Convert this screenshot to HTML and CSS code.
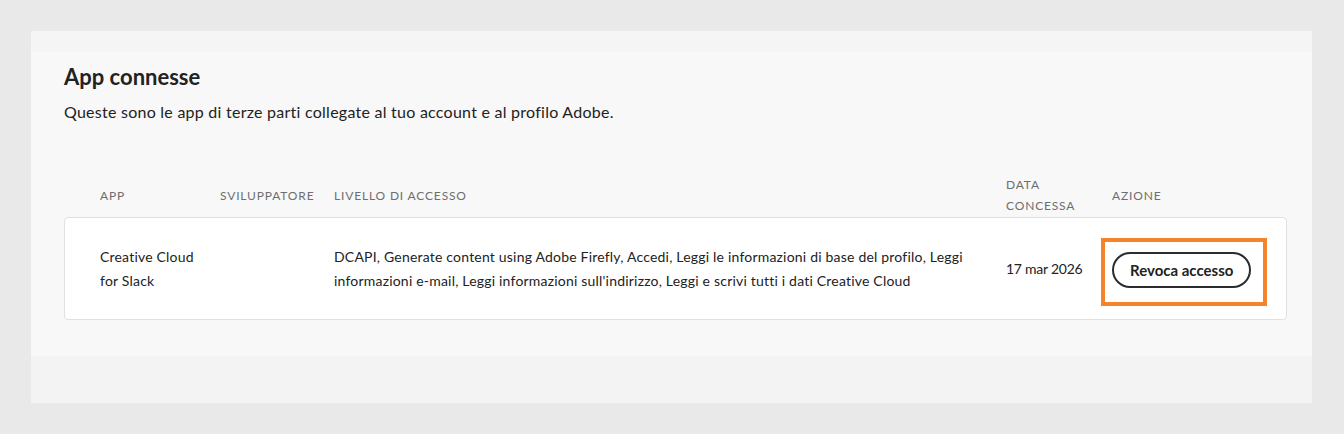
FILE: index.html
```html
<!DOCTYPE html>
<html lang="it">
<head>
<meta charset="utf-8">
<title>App connesse</title>
<link rel="stylesheet" href="styles.css">
</head>
<body>
<div class="page">
  <div class="panel">
    <div class="strip-top"></div>
    <section class="section">
      <h2 class="title">App connesse</h2>
      <p class="subtitle">Queste sono le app di terze parti collegate al tuo account e al profilo Adobe.</p>
      <div class="table">
        <div class="thead grid">
          <div class="th">App</div>
          <div class="th">Sviluppatore</div>
          <div class="th">Livello di accesso</div>
          <div class="th">Data<br>concessa</div>
          <div class="th">Azione</div>
        </div>
        <div class="tbody">
          <div class="row grid">
            <div class="td">Creative Cloud<br>for Slack</div>
            <div class="td"></div>
            <div class="td">DCAPI, Generate content using Adobe Firefly, Accedi, Leggi le informazioni di base del profilo, Leggi informazioni e-mail, Leggi informazioni sull'indirizzo, Leggi e scrivi tutti i dati Creative Cloud</div>
            <div class="td date">17 mar 2026</div>
            <div class="td action">
              <div class="highlight"><button class="btn">Revoca accesso</button></div>
            </div>
          </div>
        </div>
      </div>
    </section>
    <div class="strip-bottom"></div>
  </div>
</div>
</body>
</html>
```
FILE: styles.css
```css
html, body {
  margin: 0;
  padding: 0;
  background: #e9e9e9;
  font-family: Lato, "Open Sans", sans-serif;
  color: #222222;
}
.page {
  padding: 31px 32px 32px 31px;
}
.panel {
  background: #f3f3f3;
}
.strip-top {
  height: 21px;
  background: #f5f5f5;
}
.strip-bottom {
  height: 47px;
  background: #f3f3f3;
}
.section {
  background: #f8f8f8;
  padding: 8px 25px 36px 33px;
}
.title {
  margin: 0;
  font-size: 22px;
  line-height: 34px;
  font-weight: 700;
  color: #222222;
}
.subtitle {
  margin: 6px 0 0;
  font-size: 16px;
  line-height: 24px;
  letter-spacing: 0.25px;
  color: #222222;
}
.table {
  margin-top: 50px;
}
.grid {
  display: grid;
  grid-template-columns: 36px 120px 114px 672px 106px 1fr;
}
.row.grid {
  grid-template-columns: 35px 120px 114px 672px 106px 1fr;
}
.grid > :first-child {
  grid-column: 2;
}
.thead {
  align-items: center;
  padding-bottom: 1px;
}
.th {
  font-size: 12px;
  line-height: 21px;
  text-transform: uppercase;
  letter-spacing: 0.07em;
  color: #6e6e6e;
}
.tbody {
  background: #ffffff;
  border: 1px solid #e1e1e1;
  border-radius: 4px;
}
.row {
  align-items: center;
  min-height: 101px;
}
.td {
  font-size: 14px;
  line-height: 24px;
  letter-spacing: 0.2px;
  color: #222222;
  padding-right: 24px;
}
.td.date {
  letter-spacing: -0.25px;
}
.td.action {
  padding-right: 0;
}
.highlight {
  display: inline-block;
  margin-left: -11px;
  margin-top: 6px;
  border: 4px solid #f5832a;
  padding: 10px 12px 14px 7px;
}
.btn {
  font-family: inherit;
  font-size: 15px;
  font-weight: 700;
  color: #222222;
  background: #ffffff;
  border: 2px solid #2c2c2c;
  border-radius: 18px;
  height: 36px;
  padding: 0 16px;
  white-space: nowrap;
  cursor: pointer;
}
```
